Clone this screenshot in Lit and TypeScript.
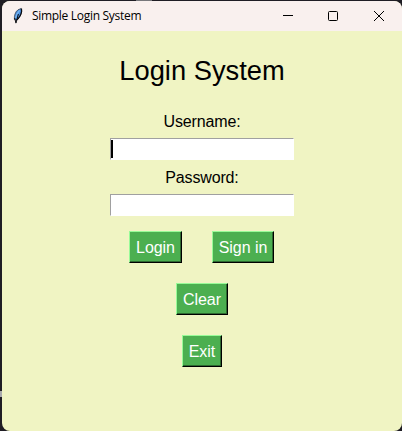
import { LitElement, html, css } from "lit";
import { customElement, property } from "lit/decorators.js";

@customElement("tk-button")
class TkButton extends LitElement {
  @property() label = "";
  static styles = css`
    :host { display: block; }
    .btn {
      display: block;
      box-sizing: border-box;
      width: 100%;
      height: 32px;
      padding: 2px 0 0;
      border: 1px solid;
      border-color: #98fb98 #000 #000 #98fb98;
      border-radius: 0;
      background: #4caf50;
      box-shadow: inset -1px -1px 0 #2e6930;
      color: #fff;
      font: 16px/28px "Liberation Sans", Arial, sans-serif;
      letter-spacing: -0.05px;
      text-align: center;
      white-space: nowrap;
    }
  `;
  render() {
    return html`<button class="btn">${this.label}</button>`;
  }
}

@customElement("app-root")
class AppRoot extends LitElement {
  static styles = css`
    :host {
      display: block;
      box-sizing: border-box;
      width: 402px;
      height: 431px;
      padding: 1px 0 0 2px;
      background: linear-gradient(#a9a9ad, #a9a9ad) 0 391px / 2px 6px no-repeat,
        linear-gradient(#77777b, #77777b) 136px 0 / 16px 1px no-repeat, #1f1d24;
      font-family: "Liberation Sans", Arial, sans-serif;
      color: #000;
      overflow: hidden;
    }
    .window {
      width: 400px;
      height: 430px;
      border-radius: 8px;
      overflow: hidden;
      background: #f0f4c3;
    }
    .bar {
      display: flex;
      align-items: center;
      height: 30px;
      background: #f9f0ee;
    }
    .feather { width: 12px; height: 18px; margin: 0 8px 0 10px; }
    .caption {
      flex: 1;
      font: 12px/30px "Open Sans", "Noto Sans", sans-serif;
      letter-spacing: -0.3px;
      white-space: nowrap;
    }
    .control { display: flex; justify-content: center; width: 46px; }
    .min { width: 44px; }
    .controls { display: flex; }
    .glyph { width: 12px; height: 12px; }
    .content { display: flex; flex-direction: column; align-items: center; }
    .title {
      margin: 20px 0 0;
      font-size: 27.3px;
      line-height: 40px;
      font-weight: 400;
      white-space: nowrap;
    }
    .field { display: flex; flex-direction: column; align-items: center; }
    .user { margin-top: 19px; }
    .pass { margin-top: 6px; }
    .label { font-size: 16px; line-height: 24px; height: 28px; letter-spacing: -0.15px; }
    .entry {
      display: flex;
      box-sizing: border-box;
      width: 184px;
      height: 22px;
      border: 1px solid;
      border-color: #a0a0a0 #fff #fff #a0a0a0;
      background: #fff;
    }
    .caret { width: 2px; height: 18px; margin-top: 1px; background: #000; }
    .row { display: flex; gap: 30px; margin: 15px 1px 20px 0; }
    .login { width: 53px; }
    .signin { width: 62px; }
    .clear { width: 52px; margin-bottom: 20px; }
    .exit { width: 40px; }
  `;
  render() {
    return html`
      <div class="window">
        <div class="bar">
          <svg class="feather" viewBox="0 0 12 18">
            <path d="M2.4 12.5C2 9 3.2 4.8 6 2.8L9.2 1.5L9.6 4C9.4 7.5 7.4 11.2 4.4 13.2Z" fill="#4a90e0" stroke="#3a3f4a" stroke-width="0.8" />
            <path d="M7.6 3.4C5.6 5.6 4.2 8.4 3.6 11" fill="none" stroke="#7db8f2" stroke-width="1.1" />
            <path d="M9.4 1.6L9.6 4.5C9 8 7.4 10.8 4.6 13" fill="none" stroke="#0b0d12" stroke-width="1.3" />
            <path d="M6.4 7L3.9 16.2" fill="none" stroke="#0b0d12" stroke-width="1" />
            <path d="M2.6 11L4 16" fill="none" stroke="#0b0d12" stroke-width="1" />
          </svg>
          <span class="caption">Simple Login System</span>
          <div class="controls">
            <span class="control min"><svg class="glyph" viewBox="0 0 12 12"><path d="M1 5.5H11" stroke="#000" /></svg></span>
            <span class="control"><svg class="glyph" viewBox="0 0 12 12"><rect x="1.5" y="1.5" width="9" height="9" rx="1" fill="none" stroke="#000" /></svg></span>
            <span class="control"><svg class="glyph" viewBox="0 0 12 12"><path d="M1 1L11 11M11 1L1 11" stroke="#000" /></svg></span>
          </div>
        </div>
        <div class="content">
          <h1 class="title">Login System</h1>
          <div class="field user">
            <span class="label">Username:</span>
            <div class="entry"><span class="caret"></span></div>
          </div>
          <div class="field pass">
            <span class="label">Password:</span>
            <div class="entry"></div>
          </div>
          <div class="row">
            <tk-button class="login" label="Login"></tk-button>
            <tk-button class="signin" label="Sign in"></tk-button>
          </div>
          <tk-button class="clear" label="Clear"></tk-button>
          <tk-button class="exit" label="Exit"></tk-button>
        </div>
      </div>
    `;
  }
}
